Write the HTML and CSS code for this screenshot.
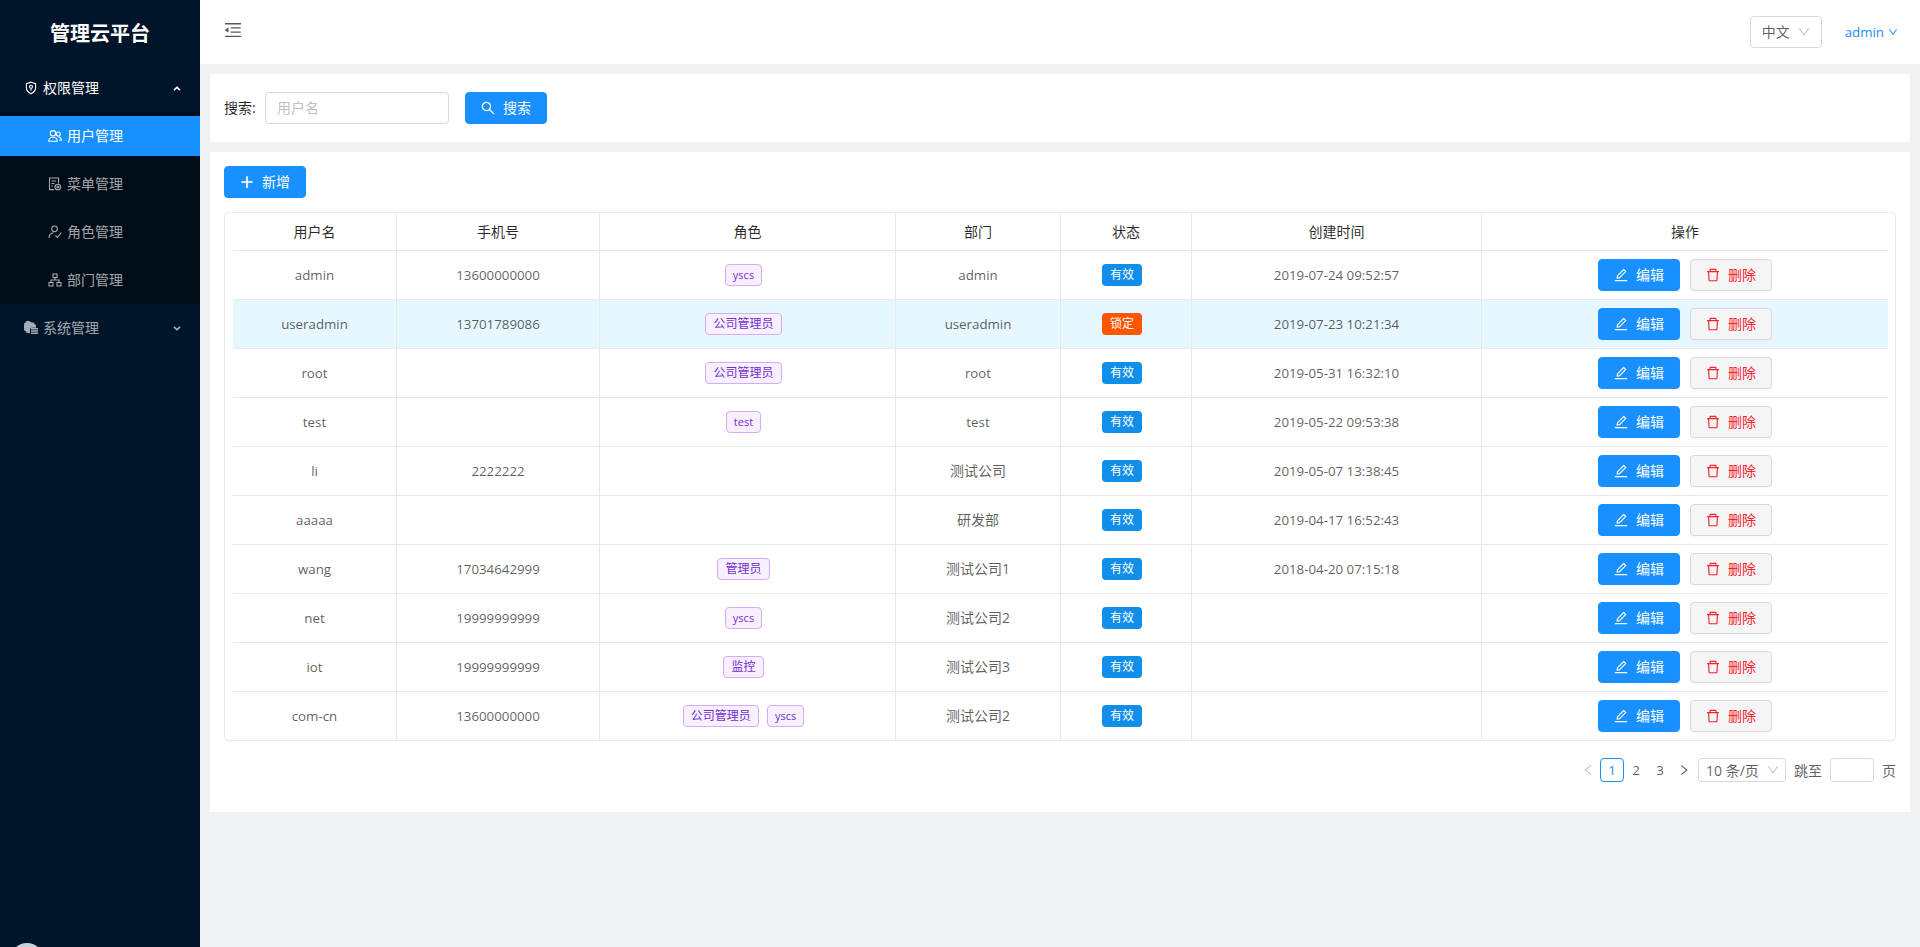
FILE: index.html
```html
<!DOCTYPE html>
<html lang="zh-CN">
<head>
<meta charset="utf-8">
<title>管理云平台</title>
<link rel="stylesheet" href="styles.css">
</head>
<body>
<svg class="sprite" xmlns="http://www.w3.org/2000/svg">
  <symbol id="i-plus" viewBox="64 64 896 896"><path d="M482 152h60q8 0 8 8v704q0 8-8 8h-60q-8 0-8-8V160q0-8 8-8z"/><path d="M176 474h672q8 0 8 8v60q0 8-8 8H176q-8 0-8-8v-60q0-8 8-8z"/></symbol>
  <symbol id="i-search" viewBox="64 64 896 896"><path d="M909.6 854.5L649.9 594.8C690.2 542.7 712 479 712 412c0-80.2-31.3-155.4-87.9-212.1-56.6-56.7-132-87.9-212.1-87.9s-155.5 31.3-212.1 87.9C143.2 256.5 112 331.8 112 412c0 80.1 31.3 155.5 87.9 212.1C256.5 680.8 331.8 712 412 712c67 0 130.6-21.8 182.7-62l259.7 259.6a8.2 8.2 0 0 0 11.6 0l43.6-43.5a8.2 8.2 0 0 0 0-11.6zM570.4 570.4C528 612.7 471.8 636 412 636s-116-23.3-158.4-65.6C211.3 528 188 471.8 188 412s23.3-116.1 65.6-158.4C296 211.3 352.2 188 412 188s116.1 23.2 158.4 65.6S636 352.2 636 412s-23.3 116.1-65.6 158.4z"/></symbol>
  <symbol id="i-edit" viewBox="64 64 896 896"><path d="M257.7 752c2 0 4-.2 6-.5L431.9 722c2-.4 3.9-1.3 5.3-2.8l423.9-423.9a9.96 9.96 0 0 0 0-14.1L694.9 114.9c-1.9-1.9-4.4-2.9-7.1-2.9s-5.2 1-7.1 2.9L256.8 538.8c-1.5 1.5-2.4 3.3-2.8 5.3l-29.5 168.2a33.5 33.5 0 0 0 9.4 29.8c6.6 6.4 14.9 9.9 23.8 9.9zm67.4-174.4L687.8 215l73.3 73.3-362.7 362.6-88.9 15.7 15.6-89zM880 836H144c-17.7 0-32 14.3-32 32v36c0 4.4 3.6 8 8 8h784c4.4 0 8-3.6 8-8v-36c0-17.7-14.3-32-32-32z"/></symbol>
  <symbol id="i-delete" viewBox="64 64 896 896"><path d="M360 184h-8c4.4 0 8-3.6 8-8v8h304v-8c0 4.4 3.6 8 8 8h-8v72h72v-80c0-35.3-28.7-64-64-64H352c-35.3 0-64 28.7-64 64v80h72v-72zm504 72H160c-17.7 0-32 14.3-32 32v32c0 4.4 3.6 8 8 8h60.4l24.7 523c1.6 34.1 29.8 61 63.9 61h454c34.2 0 62.3-26.8 63.9-61l24.7-523H888c4.4 0 8-3.6 8-8v-32c0-17.7-14.3-32-32-32zM731.3 840H292.7l-24.2-512h487l-24.2 512z"/></symbol>
  <symbol id="i-down" viewBox="64 64 896 896"><path d="M884 256h-75c-5.1 0-9.9 2.5-12.9 6.6L512 654.2 227.9 262.6c-3-4.1-7.8-6.6-12.9-6.6h-75c-6.5 0-10.3 7.4-6.5 12.7l352.6 486.1c12.8 17.6 39 17.6 51.7 0l352.6-486.1c3.9-5.3.1-12.7-6.4-12.7z"/></symbol>
  <symbol id="i-left" viewBox="64 64 896 896"><path d="M724 218.3V141c0-6.7-7.7-10.4-12.9-6.3L260.3 486.8a31.86 31.86 0 0 0 0 50.3l450.8 352.1c5.3 4.1 12.9.4 12.9-6.3v-77.3c0-4.9-2.3-9.6-6.1-12.6l-360-281 360-281.1c3.8-3 6.1-7.7 6.1-12.6z"/></symbol>
  <symbol id="i-right" viewBox="64 64 896 896"><path d="M765.7 486.8L314.9 134.7A7.97 7.97 0 0 0 302 141v77.3c0 4.9 2.3 9.6 6.1 12.6l360 281.1-360 281.1c-3.9 3-6.1 7.7-6.1 12.6V883c0 6.7 7.7 10.4 12.9 6.3l450.8-352.1a31.96 31.96 0 0 0 0-50.4z"/></symbol>
  <symbol id="i-outdent" viewBox="64 64 896 896"><path d="M408 442h480c4.4 0 8-3.6 8-8v-56c0-4.4-3.6-8-8-8H408c-4.4 0-8 3.6-8 8v56c0 4.4 3.6 8 8 8zm-8 204c0 4.4 3.6 8 8 8h480c4.4 0 8-3.6 8-8v-56c0-4.4-3.6-8-8-8H408c-4.4 0-8 3.6-8 8v56zm504-486H120c-4.4 0-8 3.6-8 8v56c0 4.4 3.6 8 8 8h784c4.4 0 8-3.6 8-8v-56c0-4.4-3.6-8-8-8zm0 632H120c-4.4 0-8 3.6-8 8v56c0 4.4 3.6 8 8 8h784c4.4 0 8-3.6 8-8v-56c0-4.4-3.6-8-8-8zM115.4 518.9L271.7 642c5.8 4.6 14.4.5 14.4-6.9V388.9c0-7.4-8.5-11.5-14.4-6.9L115.4 505.1a8.74 8.74 0 0 0 0 13.8z"/></symbol>
  <symbol id="i-shield" viewBox="0 0 14 14"><path class="ln" d="M7 1.2l4.600 1.500v4.100c0 2.800-2 4.700-4.600 6-2.600-1.300-4.600-3.200-4.600-6V2.700z"/><circle cx="7" cy="5.800" r="1.500" class="ln"/><path class="ln" d="M7 7.300v2.400"/></symbol>
  <symbol id="i-users" viewBox="0 0 14 14"><circle cx="5" cy="4.300" r="2.700" class="ln"/><path class="ln" d="M.7 12.300c0-2.600 1.900-4 4.300-4s4.300 1.400 4.300 4z"/><circle cx="10.300" cy="5" r="2" class="ln"/><path class="ln" d="M10.500 8c1.700.2 2.900 1.300 2.900 3.300h-2"/></symbol>
  <symbol id="i-file" viewBox="0 0 14 14"><path class="ln" d="M6 12.600H1.500V1h9v5.500"/><path class="ln" d="M3.500 4h4.500M3.500 6.500h3M3.500 9h1.500"/><circle cx="9.800" cy="10" r="2.800" class="ln"/><circle cx="9.800" cy="10" r="1" class="ln"/></symbol>
  <symbol id="i-role" viewBox="0 0 14 14"><circle cx="6.500" cy="3.800" r="2.800" class="ln"/><path class="ln" d="M1 13c0-3 1.500-5 4.500-5.300M7.500 10.500l2 2 3.800-5"/></symbol>
  <symbol id="i-org" viewBox="0 0 14 14"><rect x="5" y="1" width="4" height="3.500" class="ln"/><rect x="1" y="9.500" width="4" height="3.500" class="ln"/><rect x="9" y="9.500" width="4" height="3.500" class="ln"/><path class="ln" d="M7 4.500v2.500M3 9.500V7h8v2.500"/></symbol>
  <symbol id="i-system" viewBox="0 0 14 14"><path d="M6 .6l1.700 1 1.900-.2.8 1.700 1.700.9-.2 1.900.400.9H7.500a1.500 1.500 0 0 0-1.500 1.500v4.300l-1.600-.9-1.900.2-.8-1.700-1.700-.9.2-1.900-1-1.600 1-1.600-.2-1.900 1.700-.9.8-1.700 1.900.2z"/><path d="M7 7h7v1.400H7zM7 9.300h7v1.400H7zM7 11.600h7V13H7z"/></symbol>
</svg>

<div class="app">
  <aside class="sider">
    <div class="logo">管理云平台</div>
    <nav class="menu">
      <div class="menu-title is-open">
        <svg class="ico"><use href="#i-shield"/></svg><span class="menu-text">权限管理</span>
        <svg class="arrow" viewBox="0 0 10 6"><path d="M1.200 5L5 1.500 8.800 5"/></svg>
      </div>
      <ul class="submenu">
        <li class="sub-item is-active"><svg class="ico"><use href="#i-users"/></svg><span class="sub-text">用户管理</span></li>
        <li class="sub-item"><svg class="ico"><use href="#i-file"/></svg><span class="sub-text">菜单管理</span></li>
        <li class="sub-item"><svg class="ico"><use href="#i-role"/></svg><span class="sub-text">角色管理</span></li>
        <li class="sub-item"><svg class="ico"><use href="#i-org"/></svg><span class="sub-text">部门管理</span></li>
      </ul>
      <div class="menu-title">
        <svg class="ico ico-fill"><use href="#i-system"/></svg><span class="menu-text">系统管理</span>
        <svg class="arrow" viewBox="0 0 10 6"><path d="M1.200 1L5 4.500 8.800 1"/></svg>
      </div>
    </nav>
    <div class="avatar"></div>
  </aside>

  <div class="main">
    <header class="topbar">
      <svg class="fold"><use href="#i-outdent"/></svg>
      <div class="top-right">
        <div class="lang"><span class="lang-text">中文</span><svg class="caret"><use href="#i-down"/></svg></div>
        <div class="user"><span class="latin">admin</span><svg class="user-caret"><use href="#i-down"/></svg></div>
      </div>
    </header>

    <main class="content">
      <section class="card search-card">
        <label class="search-label">搜索:</label>
        <input class="input" type="text" placeholder="用户名">
        <button class="btn btn-primary btn-search"><svg class="btn-ico"><use href="#i-search"/></svg><span class="btn-text">搜索</span></button>
      </section>

      <section class="card table-card">
        <button class="btn btn-primary"><svg class="btn-ico ico-plus"><use href="#i-plus"/></svg><span class="btn-text">新增</span></button>
        <div class="table-wrap">
          <table class="table">
            <colgroup><col class="c1"><col class="c2"><col class="c3"><col class="c4"><col class="c5"><col class="c6"><col class="c7"></colgroup>
            <thead><tr><th>用户名</th><th>手机号</th><th>角色</th><th>部门</th><th>状态</th><th>创建时间</th><th>操作</th></tr></thead>
            <tbody>
              <tr><td class="latin">admin</td><td class="latin">13600000000</td><td><span class="tag tag-latin">yscs</span></td><td class="latin">admin</td><td><span class="status">有效</span></td><td class="latin">2019-07-24 09:52:57</td><td><div class="ops"><button class="btn btn-primary"><svg class="btn-ico"><use href="#i-edit"/></svg><span class="btn-text">编辑</span></button><button class="btn btn-danger"><svg class="btn-ico"><use href="#i-delete"/></svg><span class="btn-text">删除</span></button></div></td></tr>
              <tr class="is-selected"><td class="latin">useradmin</td><td class="latin">13701789086</td><td><span class="tag">公司管理员</span></td><td class="latin">useradmin</td><td><span class="status status-locked">锁定</span></td><td class="latin">2019-07-23 10:21:34</td><td><div class="ops"><button class="btn btn-primary"><svg class="btn-ico"><use href="#i-edit"/></svg><span class="btn-text">编辑</span></button><button class="btn btn-danger"><svg class="btn-ico"><use href="#i-delete"/></svg><span class="btn-text">删除</span></button></div></td></tr>
              <tr><td class="latin">root</td><td></td><td><span class="tag">公司管理员</span></td><td class="latin">root</td><td><span class="status">有效</span></td><td class="latin">2019-05-31 16:32:10</td><td><div class="ops"><button class="btn btn-primary"><svg class="btn-ico"><use href="#i-edit"/></svg><span class="btn-text">编辑</span></button><button class="btn btn-danger"><svg class="btn-ico"><use href="#i-delete"/></svg><span class="btn-text">删除</span></button></div></td></tr>
              <tr><td class="latin">test</td><td></td><td><span class="tag tag-latin">test</span></td><td class="latin">test</td><td><span class="status">有效</span></td><td class="latin">2019-05-22 09:53:38</td><td><div class="ops"><button class="btn btn-primary"><svg class="btn-ico"><use href="#i-edit"/></svg><span class="btn-text">编辑</span></button><button class="btn btn-danger"><svg class="btn-ico"><use href="#i-delete"/></svg><span class="btn-text">删除</span></button></div></td></tr>
              <tr><td class="latin">li</td><td class="latin">2222222</td><td></td><td class="cjk">测试公司</td><td><span class="status">有效</span></td><td class="latin">2019-05-07 13:38:45</td><td><div class="ops"><button class="btn btn-primary"><svg class="btn-ico"><use href="#i-edit"/></svg><span class="btn-text">编辑</span></button><button class="btn btn-danger"><svg class="btn-ico"><use href="#i-delete"/></svg><span class="btn-text">删除</span></button></div></td></tr>
              <tr><td class="latin">aaaaa</td><td></td><td></td><td class="cjk">研发部</td><td><span class="status">有效</span></td><td class="latin">2019-04-17 16:52:43</td><td><div class="ops"><button class="btn btn-primary"><svg class="btn-ico"><use href="#i-edit"/></svg><span class="btn-text">编辑</span></button><button class="btn btn-danger"><svg class="btn-ico"><use href="#i-delete"/></svg><span class="btn-text">删除</span></button></div></td></tr>
              <tr><td class="latin">wang</td><td class="latin">17034642999</td><td><span class="tag">管理员</span></td><td class="cjk">测试公司1</td><td><span class="status">有效</span></td><td class="latin">2018-04-20 07:15:18</td><td><div class="ops"><button class="btn btn-primary"><svg class="btn-ico"><use href="#i-edit"/></svg><span class="btn-text">编辑</span></button><button class="btn btn-danger"><svg class="btn-ico"><use href="#i-delete"/></svg><span class="btn-text">删除</span></button></div></td></tr>
              <tr><td class="latin">net</td><td class="latin">19999999999</td><td><span class="tag tag-latin">yscs</span></td><td class="cjk">测试公司2</td><td><span class="status">有效</span></td><td></td><td><div class="ops"><button class="btn btn-primary"><svg class="btn-ico"><use href="#i-edit"/></svg><span class="btn-text">编辑</span></button><button class="btn btn-danger"><svg class="btn-ico"><use href="#i-delete"/></svg><span class="btn-text">删除</span></button></div></td></tr>
              <tr><td class="latin">iot</td><td class="latin">19999999999</td><td><span class="tag">监控</span></td><td class="cjk">测试公司3</td><td><span class="status">有效</span></td><td></td><td><div class="ops"><button class="btn btn-primary"><svg class="btn-ico"><use href="#i-edit"/></svg><span class="btn-text">编辑</span></button><button class="btn btn-danger"><svg class="btn-ico"><use href="#i-delete"/></svg><span class="btn-text">删除</span></button></div></td></tr>
              <tr class="is-last"><td class="latin">com-cn</td><td class="latin">13600000000</td><td><span class="tag">公司管理员</span><span class="tag tag-latin">yscs</span></td><td class="cjk">测试公司2</td><td><span class="status">有效</span></td><td></td><td><div class="ops"><button class="btn btn-primary"><svg class="btn-ico"><use href="#i-edit"/></svg><span class="btn-text">编辑</span></button><button class="btn btn-danger"><svg class="btn-ico"><use href="#i-delete"/></svg><span class="btn-text">删除</span></button></div></td></tr>
            </tbody>
          </table>
        </div>
        <div class="pager">
          <span class="page-nav is-disabled"><svg class="nav-ico"><use href="#i-left"/></svg></span>
          <span class="page is-current">1</span>
          <span class="page">2</span>
          <span class="page">3</span>
          <span class="page-nav"><svg class="nav-ico"><use href="#i-right"/></svg></span>
          <div class="page-size"><span>10 条/页</span><svg class="caret"><use href="#i-down"/></svg></div>
          <span class="jump-text">跳至</span>
          <input class="jump-input" type="text">
          <span class="jump-text">页</span>
        </div>
      </section>
    </main>
  </div>
</div>
</body>
</html>
```

FILE: styles.css
```css
* { box-sizing: border-box; }
html, body { margin: 0; height: 100%; overflow: hidden; }
body {
  font-family: "Open Sans", "Noto Sans CJK SC", sans-serif;
  font-size: 14px;
  color: rgba(0, 0, 0, .65);
  background: #f0f2f5;
}
.sprite { display: none; }
.ln { fill: none; stroke: currentColor; stroke-width: 1.1; }

.app { display: flex; height: 947px; }

/* Sidebar */
.sider {
  position: relative;
  flex: 0 0 200px;
  width: 200px;
  background: #001529;
  overflow: hidden;
  color: rgba(255, 255, 255, .65);
}
.logo {
  height: 64px;
  display: flex;
  align-items: center;
  justify-content: center;
  font-size: 20px;
  font-weight: 700;
  color: #fff;
}
.menu-title {
  display: flex;
  align-items: center;
  height: 40px;
  margin: 4px 0;
  padding-left: 24px;
}
.menu-title.is-open { color: #fff; }
.menu-text { margin: 0 0 2px 5px; }
.sub-text { margin-bottom: 2px; }
.ico { width: 14px; height: 14px; flex: none; fill: currentColor; }
.arrow {
  width: 8px;
  height: 5px;
  margin-left: auto;
  margin-right: 19px;
  fill: none;
  stroke: currentColor;
  stroke-width: 2;
}
.submenu {
  list-style: none;
  margin: 0;
  padding: 0;
  background: #000c17;
}
.sub-item {
  display: flex;
  align-items: center;
  gap: 5px;
  height: 48px;
  padding-left: 48px;
  border-top: 4px solid transparent;
  border-bottom: 4px solid transparent;
  background-clip: padding-box;
}
.sub-item.is-active { background-color: #1890ff; color: #fff; }
.avatar {
  position: absolute;
  left: 10px;
  top: 943px;
  width: 34px;
  height: 34px;
  border-radius: 50%;
  background: #c3d1dd;
}

/* Main column */
.main { flex: 1; min-width: 0; display: flex; flex-direction: column; }
.topbar {
  height: 64px;
  flex: none;
  background: #fff;
  display: flex;
  align-items: center;
  justify-content: space-between;
  padding: 0 22px 0 24px;
}
.fold { width: 18px; height: 18px; fill: #595959; margin-bottom: 4px; }
.top-right { display: flex; align-items: center; }
.lang {
  width: 72px;
  height: 32px;
  border: 1px solid #d9d9d9;
  border-radius: 4px;
  display: flex;
  align-items: center;
  padding-left: 11px;
  margin-right: 23px;
}
.lang-text { margin-bottom: 2px; }
.caret { width: 12px; height: 12px; fill: #bfbfbf; margin-left: 8px; }
.user { display: flex; align-items: center; color: #1890ff; }
.user-caret { width: 10px; height: 10px; fill: #1890ff; margin-left: 4px; }
.latin { font-size: 13.3px; }

.content { padding: 10px; display: flex; flex-direction: column; gap: 10px; }
.card { background: #fff; padding: 14px; }
.search-card {
  display: flex;
  align-items: center;
  height: 68px;
}
.search-label {
  width: 33px;
  margin: 0 8px 2px 0;
  color: rgba(0, 0, 0, .85);
  white-space: nowrap;
}
.input {
  flex: none;
  width: 184px;
  height: 32px;
  border: 1px solid #d9d9d9;
  border-radius: 4px;
  padding: 0 11px 2px;
  font: inherit;
  color: inherit;
  outline: none;
}
.input::placeholder { color: #bfbfbf; }

.btn {
  display: inline-flex;
  align-items: center;
  justify-content: center;
  gap: 8px;
  width: 82px;
  height: 32px;
  padding: 0;
  border: 1px solid #d9d9d9;
  border-radius: 4px;
  font: inherit;
  box-shadow: 0 2px 0 rgba(0, 0, 0, .015);
}
.btn-primary { background: #1890ff; border-color: #1890ff; color: #fff; }
.btn-danger { background: #f5f5f5; color: #f5222d; }
.btn-search { margin-left: 16px; }
.btn-text { margin-bottom: 2px; }
.btn-ico { width: 14px; height: 14px; fill: currentColor; flex: none; }
.ico-plus { stroke: currentColor; stroke-width: 40; }

.table-card { padding-bottom: 30px; }
.table-wrap {
  margin-top: 14px;
  border: 1px solid #e8e8e8;
  border-radius: 4px;
  padding: 0 8px;
}
.table {
  width: 100%;
  table-layout: fixed;
  border-collapse: separate;
  border-spacing: 0;
}
.c1 { width: 164px; }
.c2 { width: 203px; }
.c3 { width: 296px; }
.c4 { width: 165px; }
.c5 { width: 131px; }
.c6 { width: 290px; }
.c7 { width: 406px; }
.table th, .table td {
  padding: 0;
  text-align: center;
  vertical-align: middle;
  border-right: 1px solid #e8e8e8;
  border-bottom: 1px solid #e8e8e8;
}
.table th:last-child, .table td:last-child { border-right: 0; }
.table th { height: 38px; padding-bottom: 2px; font-weight: 400; color: rgba(0, 0, 0, .85); }
.table td { height: 49px; }
.table td.cjk { padding-bottom: 2px; }
.is-selected td { background: #e6f7ff; }
.is-last td { height: 48px; border-bottom: 0; }

.tag {
  display: inline-block;
  vertical-align: middle;
  height: 22px;
  line-height: 20px;
  padding: 0 7px;
  margin-right: 8px;
  font-size: 12px;
  color: #722ed1;
  background: #f9f0ff;
  border: 1px solid #d3adf7;
  border-radius: 4px;
}
.tag-latin { font-size: 11px; }
.status {
  display: inline-block;
  vertical-align: middle;
  height: 22px;
  line-height: 21px;
  padding: 0 8px;
  margin-right: 8px;
  font-size: 12px;
  color: #fff;
  background: #108ee9;
  border-radius: 4px;
}
.status-locked { background: #f50; }
.ops { display: flex; justify-content: center; gap: 10px; }

.pager {
  margin-top: 17px;
  display: flex;
  justify-content: flex-end;
  align-items: center;
  height: 24px;
}
.page, .page-nav {
  width: 24px;
  height: 24px;
  display: flex;
  align-items: center;
  justify-content: center;
  border-radius: 4px;
}
.page { font-size: 13.3px; }
.page.is-current { border: 1px solid #1890ff; color: #1890ff; }
.nav-ico { width: 12px; height: 12px; fill: currentColor; }
.page-nav.is-disabled { color: rgba(0, 0, 0, .25); }
.page-size {
  width: 88px;
  height: 24px;
  margin-left: 2px;
  padding-left: 7px;
  border: 1px solid #d9d9d9;
  border-radius: 4px;
  display: flex;
  align-items: center;
  white-space: nowrap;
}
.jump-text { margin-left: 8px; }
.jump-input {
  width: 44px;
  height: 24px;
  margin-left: 8px;
  border: 1px solid #d9d9d9;
  border-radius: 4px;
  outline: none;
}
```
